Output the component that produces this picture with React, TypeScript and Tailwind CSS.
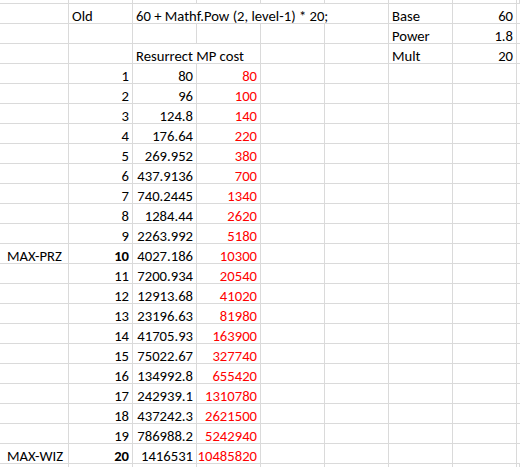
import React from "react";

type Cell = { t?: string; span?: number; align?: "l" | "r"; red?: boolean; bold?: boolean; first?: boolean };

const data: [string, string, string][] = [
  ["1", "80", "80"],
  ["2", "96", "100"],
  ["3", "124.8", "140"],
  ["4", "176.64", "220"],
  ["5", "269.952", "380"],
  ["6", "437.9136", "700"],
  ["7", "740.2445", "1340"],
  ["8", "1284.44", "2620"],
  ["9", "2263.992", "5180"],
  ["10", "4027.186", "10300"],
  ["11", "7200.934", "20540"],
  ["12", "12913.68", "41020"],
  ["13", "23196.63", "81980"],
  ["14", "41705.93", "163900"],
  ["15", "75022.67", "327740"],
  ["16", "134992.8", "655420"],
  ["17", "242939.1", "1310780"],
  ["18", "437242.3", "2621500"],
  ["19", "786988.2", "5242940"],
  ["20", "1416531", "10485820"],
];

function blank(n: number): Cell[] {
  return Array.from({ length: n }, () => ({}));
}

const rows: Cell[][] = [
  [{}, { t: "Old", align: "l" }, { t: "60 + Mathf.Pow (2, level-1) * 20;", align: "l", span: 4 }, { t: "Base", align: "l" }, { t: "60", align: "r" }],
  [...blank(6), { t: "Power", align: "l" }, { t: "1.8", align: "r" }],
  [{}, {}, { t: "Resurrect MP cost", align: "l", span: 2 }, {}, {}, { t: "Mult", align: "l" }, { t: "20", align: "r" }],
  ...data.map(([lv, a, b]) => {
    const label = lv === "10" ? "MAX-PRZ" : lv === "20" ? "MAX-WIZ" : undefined;
    const bold = lv === "10" || lv === "20";
    return [
      { t: label, align: "l" as const, first: true },
      { t: lv, align: "r" as const, bold },
      { t: a, align: "r" as const },
      { t: b, align: "r" as const, red: true },
      ...blank(4),
    ];
  }),
];

const spanClass: Record<number, string> = { 1: "col-span-1", 2: "col-span-2", 3: "col-span-3", 4: "col-span-4" };

export default function App() {
  return (
    <div
      className="w-[520px] h-[467px] overflow-hidden bg-white text-black"
      style={{ fontFamily: "Carlito, 'Liberation Sans', Arial, sans-serif" }}
    >
      <div className="grid grid-cols-[69px_repeat(7,64px)_3px]">
        {Array.from({ length: 9 }).map((_, i) => (
          <div key={"top" + i} className="h-[4px] border-r border-b border-[#dadada]" />
        ))}
        {rows.map((r, ri) => (
          <React.Fragment key={ri}>
            {r.map((c, ci) => (
              <div
                key={ci}
                className={`h-[20px] border-r border-b border-[#dadada] flex items-end whitespace-nowrap text-[14.67px] leading-[14px] ${c.first ? "pl-[7px] pr-[3px]" : "px-[3px]"} ${spanClass[c.span ?? 1]} ${c.align === "r" ? "justify-end" : "justify-start"} ${c.red ? "text-[#ff0000]" : "text-black"} ${c.bold ? "font-bold" : ""}`}
              >
                {c.t ?? ""}
              </div>
            ))}
            <div className="h-[20px] border-b border-[#dadada]" />
          </React.Fragment>
        ))}
        {Array.from({ length: 9 }).map((_, i) => (
          <div key={"bot" + i} className="h-[4px] border-r border-[#dadada]" />
        ))}
      </div>
    </div>
  );
}
